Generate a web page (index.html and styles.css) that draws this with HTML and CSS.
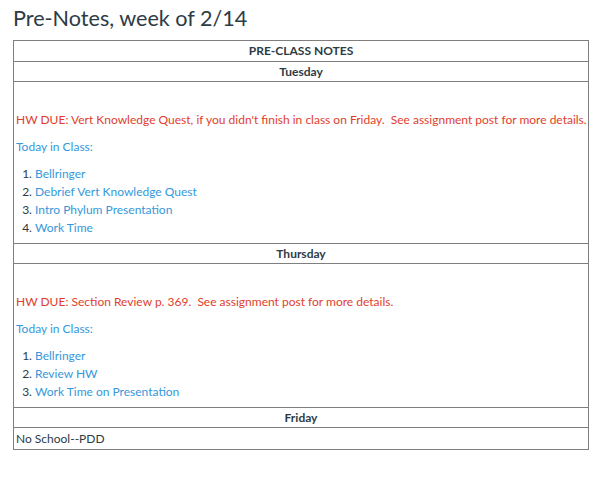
FILE: index.html
```html
<!DOCTYPE html>
<html>
<head>
<meta charset="utf-8">
<link rel="stylesheet" href="styles.css">
</head>
<body>
<div class="page">
  <h1 class="title">Pre-Notes, week of 2/14</h1>
  <table class="notes">
    <tr><th class="head">PRE-CLASS NOTES</th></tr>
    <tr><th class="day">Tuesday</th></tr>
    <tr><td class="content">
      <p class="blank"></p>
      <p class="red">HW DUE: Vert Knowledge Quest, if you didn't finish in class on Friday.&nbsp; See assignment post for more details.</p>
      <p class="blue">Today in Class:</p>
      <ol class="list">
        <li><span class="blue">Bellringer</span></li>
        <li><span class="blue">Debrief Vert Knowledge Quest</span></li>
        <li><span class="blue">Intro Phylum Presentation</span></li>
        <li><span class="blue">Work Time</span></li>
      </ol>
    </td></tr>
    <tr><th class="day">Thursday</th></tr>
    <tr><td class="content">
      <p class="blank"></p>
      <p class="red">HW DUE: Section Review p. 369.&nbsp; See assignment post for more details.</p>
      <p class="blue">Today in Class:</p>
      <ol class="list">
        <li><span class="blue">Bellringer</span></li>
        <li><span class="blue">Review HW</span></li>
        <li><span class="blue">Work Time on Presentation</span></li>
      </ol>
    </td></tr>
    <tr><th class="day">Friday</th></tr>
    <tr><td class="plain">No School--PDD</td></tr>
  </table>
</div>
</body>
</html>
```
FILE: styles.css
```css
html, body {
  margin: 0;
  padding: 0;
  background: #ffffff;
}
.page {
  padding: 3px 0 0 13px;
  font-family: Lato, "Open Sans", sans-serif;
  color: #2d3b45;
}
.title {
  margin: 0 0 7px 0;
  font-size: 21.6px;
  font-weight: 400;
  line-height: 30px;
  color: #2d3b45;
}
.notes {
  width: 576px;
  border-collapse: collapse;
  font-size: 12px;
  line-height: 18px;
}
.notes th, .notes td {
  border: 1px solid #7f7f7f;
}
.head, .day {
  font-weight: 700;
  text-align: center;
  color: #2d3b45;
}
.head {
  padding: 1px 2px;
}
.day {
  padding: 1px 2px 0 2px;
}
.content {
  padding: 2px 0 2px 2px;
  vertical-align: top;
}
.content p {
  margin: 0 0 9px 0;
}
.blank {
  height: 18px;
}
.red {
  color: #e03e2d;
  white-space: nowrap;
}
.blue {
  color: #3598db;
}
.list {
  margin: 8px 0 4px 0;
  padding-left: 19px;
}
.plain {
  padding: 2px 2px 1px 2px;
  color: #2d3b45;
}
```
